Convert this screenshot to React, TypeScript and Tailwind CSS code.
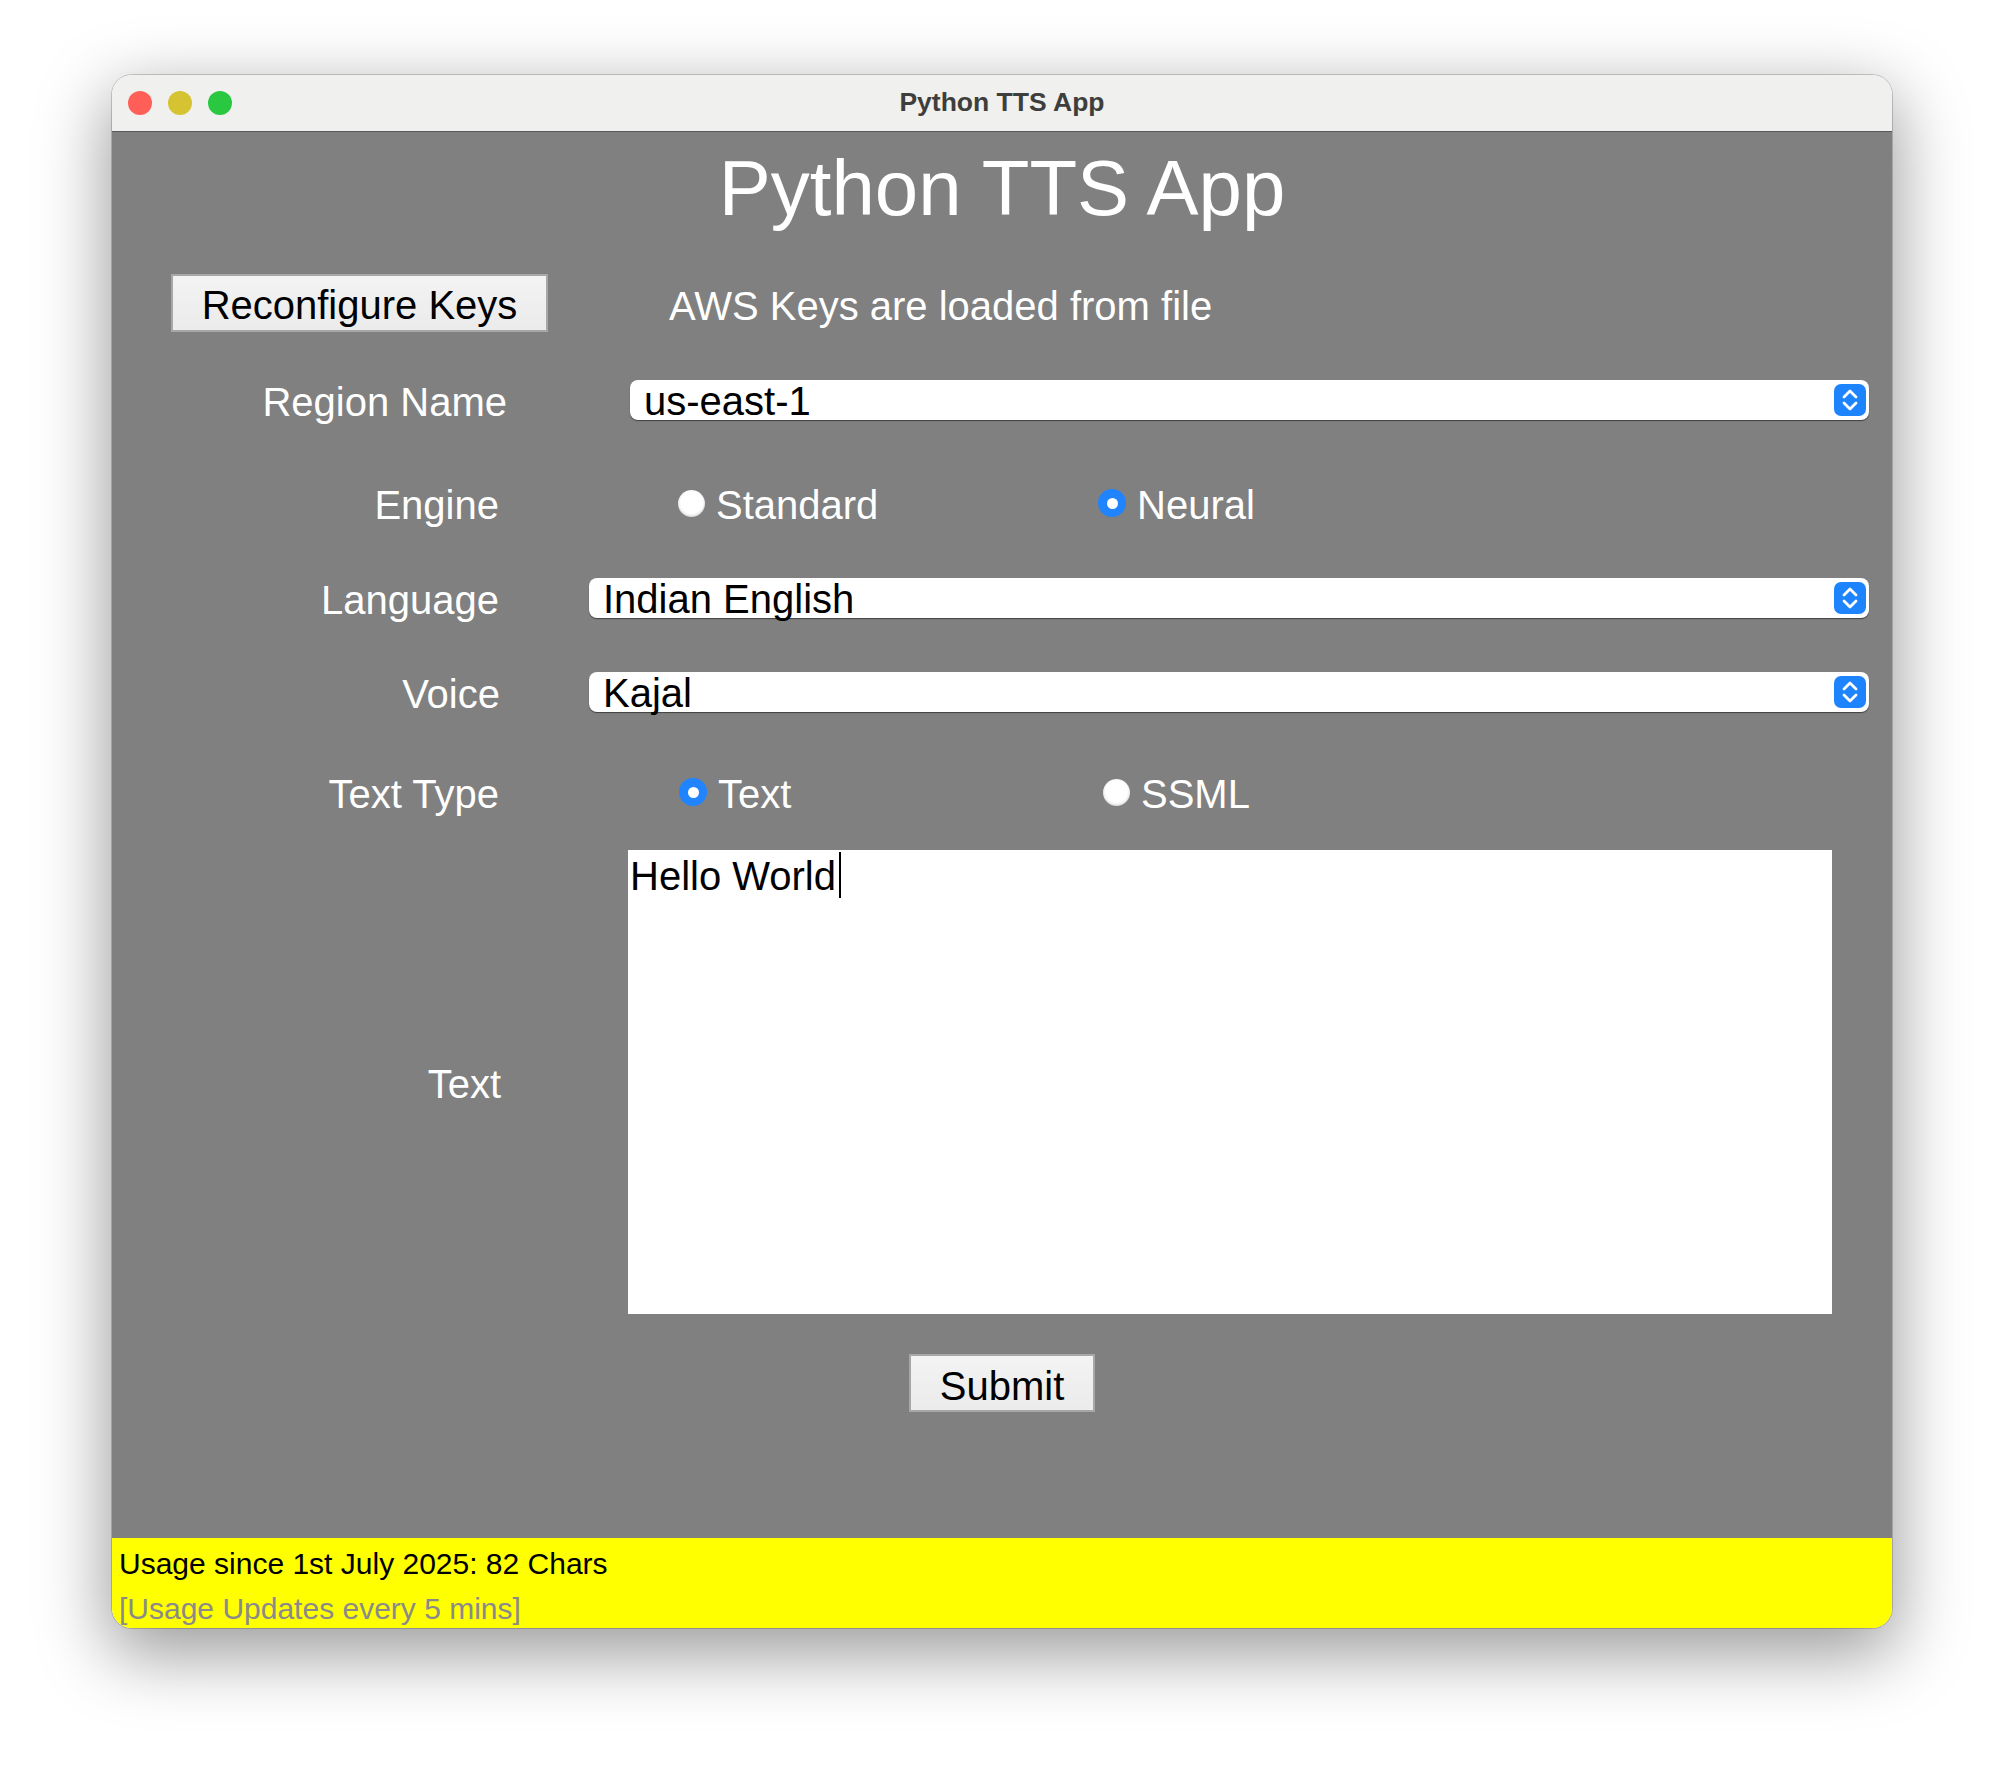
import type { ReactNode } from 'react';

const font = { fontFamily: '"Liberation Sans", Arial, sans-serif' };

function Stepper() {
  return (
    <div className="flex h-[32px] w-[32px] shrink-0 items-center justify-center rounded-[7px] bg-[#1d84fd]">
      <svg width="32" height="32" viewBox="0 0 32 32" fill="none" stroke="white" strokeWidth="2.8" strokeLinecap="round" strokeLinejoin="round">
        <path d="M10 13 L16 7 L22 13" />
        <path d="M10 19 L16 25 L22 19" />
      </svg>
    </div>
  );
}

function Select({ value }: { value: string }) {
  return (
    <div className="flex h-[40px] flex-1 items-center justify-between rounded-[8px] bg-white pl-[14px] pr-[3px] shadow-[0_1px_1px_rgba(0,0,0,0.5)]">
      <span className="pt-[2px] text-[40px] leading-[40px] text-black">{value}</span>
      <Stepper />
    </div>
  );
}

function Radio({ label, checked }: { label: string; checked?: boolean }) {
  return (
    <div className="flex items-center gap-[11px]">
      {checked ? (
        <span className="flex h-[28px] w-[28px] items-center justify-center rounded-full bg-[#1f84fd]">
          <span className="h-[11px] w-[11px] rounded-full bg-white" />
        </span>
      ) : (
        <span className="h-[27px] w-[27px] rounded-full bg-white shadow-[inset_0_-1px_3px_rgba(0,0,0,0.2)]" />
      )}
      <span className="h-[40px] pt-[2px] text-[40px] leading-[40px] text-white">{label}</span>
    </div>
  );
}

function Label({ width, children }: { width: string; children: ReactNode }) {
  return (
    <div className={`${width} h-[40px] shrink-0 pt-[2px] text-right text-[40px] leading-[40px] text-white`}>
      {children}
    </div>
  );
}

function MacButton({ children, className, pad }: { children: ReactNode; className: string; pad: string }) {
  return (
    <div
      className={`${className} ${pad} flex h-[58px] shrink-0 justify-center border-2 border-[#a7a7a7] bg-gradient-to-b from-[#f3f3f3] to-[#ebebeb] text-[40px] leading-[40px] text-black`}
    >
      {children}
    </div>
  );
}

export default function App() {
  return (
    <div className="min-h-screen bg-white pl-[112px] pt-[75px]" style={font}>
      <div className="flex h-[1553px] w-[1780px] flex-col overflow-hidden rounded-[20px] shadow-[0_0_0_1px_rgba(0,0,0,0.18),0_22px_70px_4px_rgba(0,0,0,0.4)]">
        {/* title bar */}
        <div className="grid h-[57px] shrink-0 grid-cols-[1fr_auto_1fr] items-center border-b border-[#585858] bg-[#f0f0ee]">
          <div className="flex items-center gap-[16px] pl-[16px]">
            <span className="h-[24px] w-[24px] rounded-full bg-[#ff5f57]" />
            <span className="h-[24px] w-[24px] rounded-full bg-[#d5c331]" />
            <span className="h-[24px] w-[24px] rounded-full bg-[#29c840]" />
          </div>
          <div className="text-[26.5px] font-bold text-[#3e3e3c]">Python TTS App</div>
          <div />
        </div>

        {/* body */}
        <div className="flex flex-1 flex-col bg-[#808080]">
          <div className="mt-[17px] text-center text-[78px] leading-[78px] text-white">Python TTS App</div>

          <div className="mt-[47px] flex items-start">
            <MacButton className="ml-[59px] w-[377px]" pad="pt-[9px]">Reconfigure Keys</MacButton>
            <div className="ml-[121px] pt-[12px] text-[40px] leading-[40px] text-white">AWS Keys are loaded from file</div>
          </div>

          <div className="mt-[48px] flex items-center pr-[23px]">
            <Label width="w-[395px]">Region Name</Label>
            <div className="ml-[123px] flex flex-1">
              <Select value="us-east-1" />
            </div>
          </div>

          <div className="mt-[63px] flex h-[40px] items-center">
            <Label width="w-[387px]">Engine</Label>
            <div className="ml-[179px] w-[420px]">
              <Radio label="Standard" />
            </div>
            <Radio label="Neural" checked />
          </div>

          <div className="mt-[55px] flex items-center pr-[23px]">
            <Label width="w-[387px]">Language</Label>
            <div className="ml-[90px] flex flex-1">
              <Select value="Indian English" />
            </div>
          </div>

          <div className="mt-[54px] flex items-center pr-[23px]">
            <Label width="w-[388px]">Voice</Label>
            <div className="ml-[89px] flex flex-1">
              <Select value="Kajal" />
            </div>
          </div>

          <div className="mt-[60px] flex h-[40px] items-center">
            <Label width="w-[387px]">Text Type</Label>
            <div className="ml-[180px] w-[424px]">
              <Radio label="Text" checked />
            </div>
            <Radio label="SSML" />
          </div>

          <div className="mt-[38px] flex items-center">
            <Label width="w-[389px]">Text</Label>
            <div className="ml-[127px] h-[464px] w-[1204px] bg-white">
              <div className="flex items-start pl-[2px]">
                <span className="mt-[6px] text-[40px] leading-[40px] text-black">Hello World</span>
                <span className="ml-[3px] mt-[2px] h-[46px] w-[2px] bg-black" />
              </div>
            </div>
          </div>

          <div className="mt-[40px] flex justify-center">
            <MacButton className="w-[186px]" pad="pt-[10px]">Submit</MacButton>
          </div>
        </div>

        {/* footer */}
        <div className="h-[90px] shrink-0 bg-[#ffff00] pl-[7px] pt-[3px] text-[30px] leading-[45px]">
          <div className="text-black">Usage since 1st July 2025: 82 Chars</div>
          <div className="text-[#8a8a8a]">[Usage Updates every 5 mins]</div>
        </div>
      </div>
    </div>
  );
}
